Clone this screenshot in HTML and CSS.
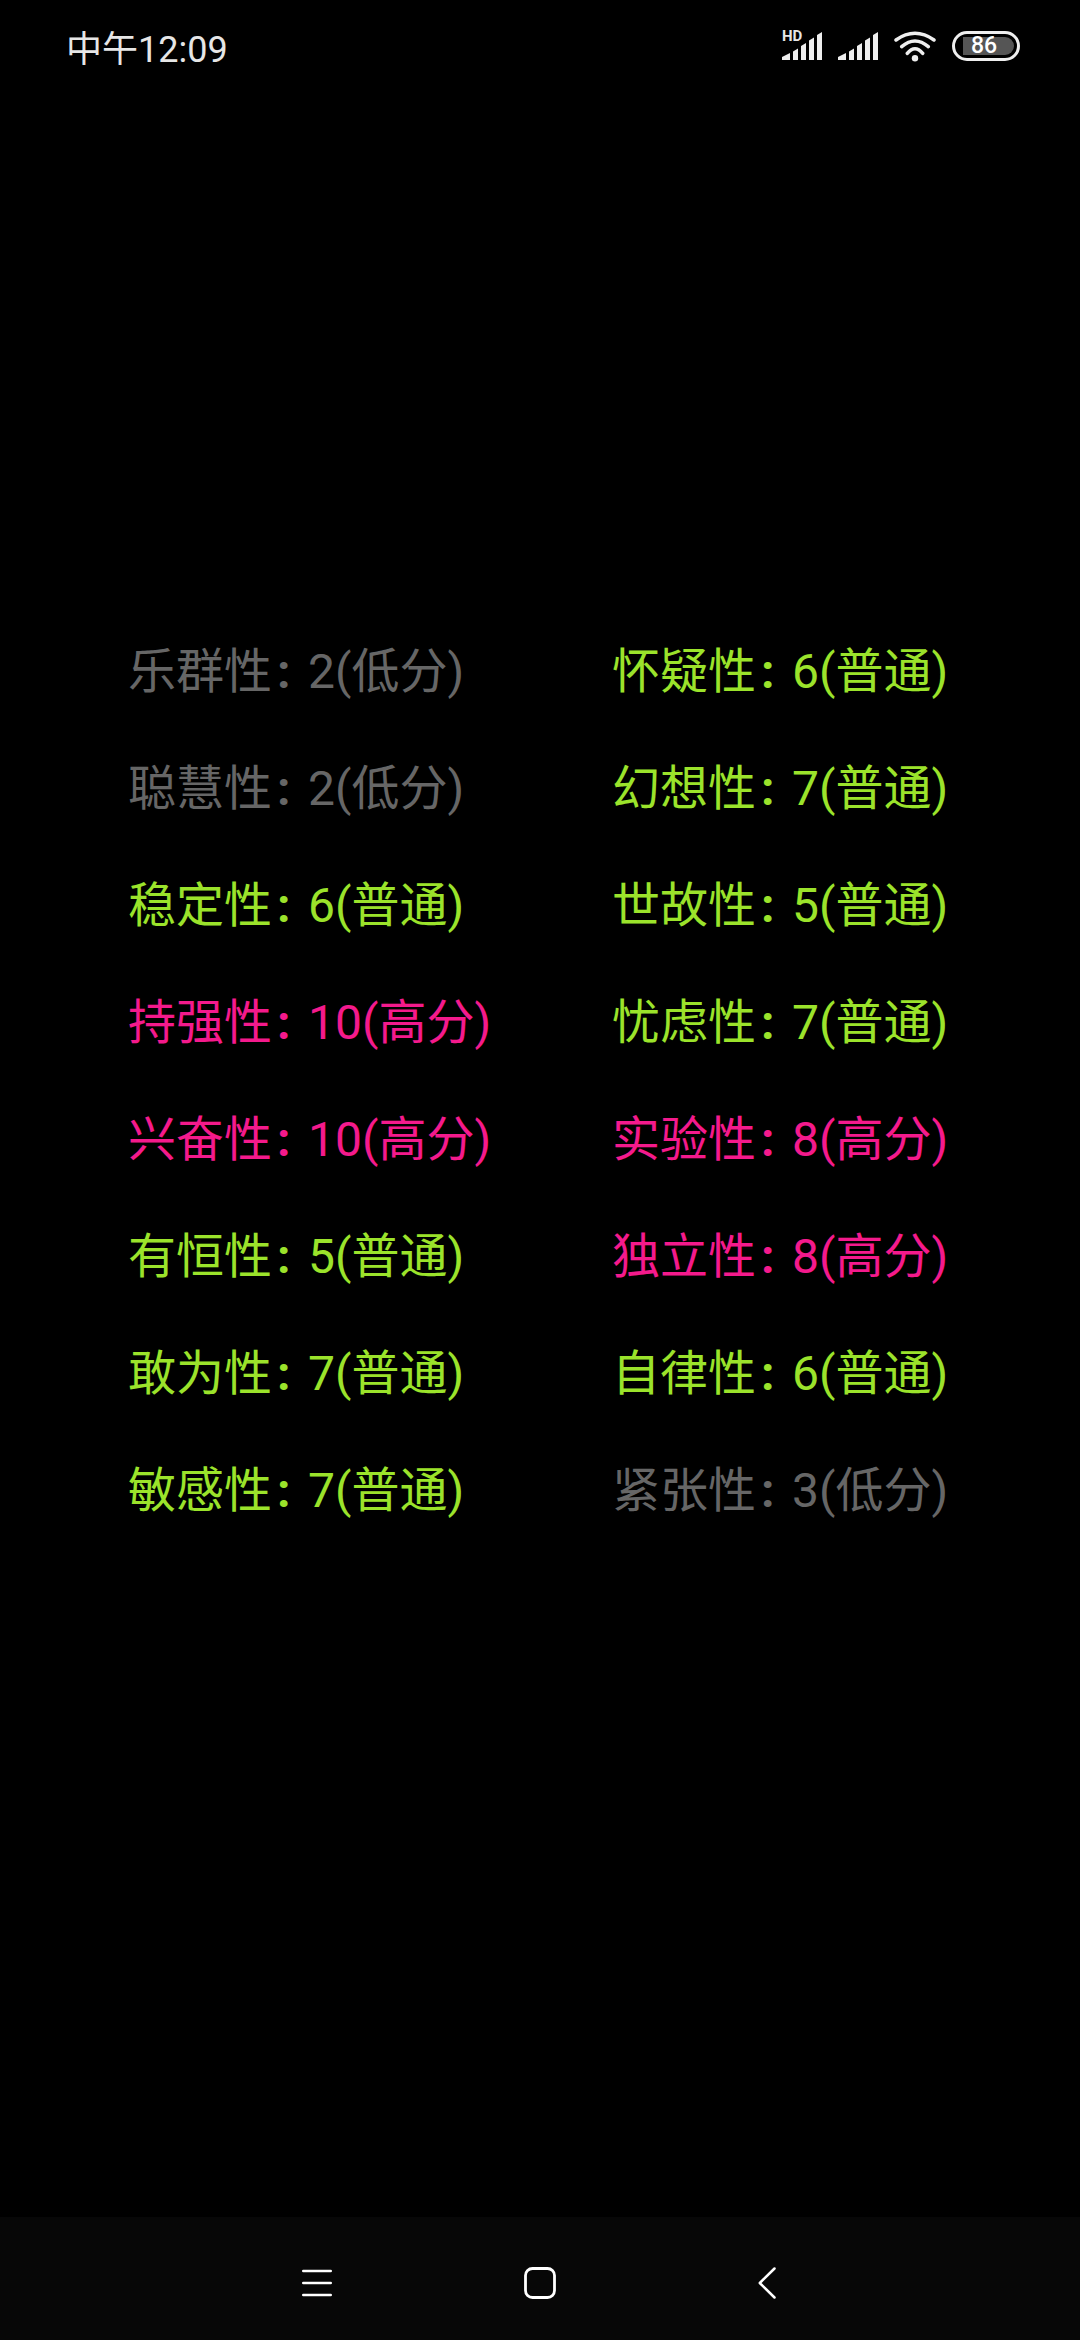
FILE: index.html
```html
<!DOCTYPE html>
<html lang="zh">
<head>
  <meta charset="UTF-8">
  <meta name="viewport" content="width=device-width, initial-scale=1.0">
  <title>性格因素</title>
  <link rel="stylesheet" href="styles.css">
</head>
<body>
  <div class="screen">
    <div class="status-bar">
      <span class="clock">中午12:09</span>
      <div class="status-icons">
        <div class="signal-hd">
          <span class="hd">HD</span>
          <svg class="signal" width="40" height="28" viewBox="0 0 40 28">
            <path d="M0 28V25L8 21V28Z M11 28V19.500L16 16.500V28Z M19 28V14L24 11V28Z M27 28V8.500L32 5.500V28Z M35 28V3L40 0V28Z" fill="#eee"/>
          </svg>
        </div>
        <svg class="signal" width="40" height="28" viewBox="0 0 40 28">
          <path d="M0 28V25L8 21V28Z M11 28V19.500L16 16.500V28Z M19 28V14L24 11V28Z M27 28V8.500L32 5.500V28Z M35 28V3L40 0V28Z" fill="#eee"/>
        </svg>
        <svg class="wifi" width="42" height="31" viewBox="0 0 42 31">
          <path d="M2 9Q21 -4.400 40 9 M7.700 15.700Q21 4.300 34.300 15.700 M13.300 22.300Q21 13 28.700 22.300" fill="none" stroke="#eee" stroke-width="3.500" stroke-linecap="round"/>
          <circle cx="21" cy="27.300" r="3.200" fill="#eee"/>
        </svg>
        <div class="battery">
          <span class="battery-level">86</span>
        </div>
      </div>
    </div>

    <div class="traits">
      <div class="trait low">乐群性<span class="sep">:</span>2(低分)</div>
      <div class="trait mid">怀疑性<span class="sep">:</span>6(普通)</div>
      <div class="trait low">聪慧性<span class="sep">:</span>2(低分)</div>
      <div class="trait mid">幻想性<span class="sep">:</span>7(普通)</div>
      <div class="trait mid">稳定性<span class="sep">:</span>6(普通)</div>
      <div class="trait mid">世故性<span class="sep">:</span>5(普通)</div>
      <div class="trait high">持强性<span class="sep">:</span>10(高分)</div>
      <div class="trait mid">忧虑性<span class="sep">:</span>7(普通)</div>
      <div class="trait high">兴奋性<span class="sep">:</span>10(高分)</div>
      <div class="trait high">实验性<span class="sep">:</span>8(高分)</div>
      <div class="trait mid">有恒性<span class="sep">:</span>5(普通)</div>
      <div class="trait high">独立性<span class="sep">:</span>8(高分)</div>
      <div class="trait mid">敢为性<span class="sep">:</span>7(普通)</div>
      <div class="trait mid">自律性<span class="sep">:</span>6(普通)</div>
      <div class="trait mid">敏感性<span class="sep">:</span>7(普通)</div>
      <div class="trait low">紧张性<span class="sep">:</span>3(低分)</div>
    </div>

    <div class="nav-bar">
      <svg class="nav-menu" width="30" height="28" viewBox="0 0 30 28">
        <path d="M1.250 2H28.750 M1.250 14H28.750 M1.250 26H28.750" stroke="#fff" stroke-width="2.500" stroke-linecap="round"/>
      </svg>
      <svg class="nav-home" width="32" height="32" viewBox="0 0 32 32">
        <rect x="1.500" y="1.500" width="29" height="29" rx="7" fill="none" stroke="#fff" stroke-width="2.800"/>
      </svg>
      <svg class="nav-back" width="18" height="32" viewBox="0 0 18 32">
        <path d="M16.500 1.500L1.800 16L16.500 30.500" fill="none" stroke="#fff" stroke-width="2.500" stroke-linecap="round" stroke-linejoin="round"/>
      </svg>
    </div>
  </div>
</body>
</html>
```

FILE: styles.css
```css
body {
  margin: 0;
  background-color: #000;
  font-family: Roboto, "Noto Sans CJK SC", sans-serif;
}
.screen {
  display: flex;
  flex-direction: column;
  width: 1080px;
  height: 2340px;
  overflow: hidden;
}
.status-bar {
  display: flex;
  align-items: center;
  justify-content: space-between;
  height: 92px;
  padding: 0 60px 0 66px;
  color: #e6e6e6;
}
.clock {
  font-size: 36px;
}
.status-icons {
  display: flex;
  align-items: center;
  gap: 16px;
}
.signal-hd {
  position: relative;
  display: flex;
}
.hd {
  position: absolute;
  left: 0;
  top: -2px;
  font-size: 15px;
  font-weight: 700;
  line-height: 13px;
}
.battery {
  display: flex;
  justify-content: flex-end;
  box-sizing: border-box;
  width: 68px;
  height: 30px;
  border: 3px solid #eee;
  border-radius: 15px;
  padding: 3px;
}
.battery-level {
  box-sizing: border-box;
  width: 51px;
  padding-left: 8px;
  background-color: #555;
  border-radius: 0 9px 9px 0;
  color: #fff;
  font-size: 23px;
  font-weight: 500;
  line-height: 18px;
}
.traits {
  flex-grow: 1;
  display: grid;
  grid-template-columns: 484px 1fr;
  grid-auto-rows: 117px;
  padding: 521px 0 0 128px;
  font-size: 48px;
}
.trait {
  line-height: 117px;
  white-space: nowrap;
}
.sep {
  display: inline-block;
  box-sizing: border-box;
  width: 36px;
  padding-left: 5px;
  font-weight: 700;
}
.low {
  color: #666;
}
.mid {
  color: #9be32b;
}
.high {
  color: #f41a8c;
}
.nav-bar {
  height: 123px;
  box-sizing: border-box;
  padding: 9px 0 0 302px;
  background-color: #070707;
  display: flex;
  align-items: center;
}
.nav-home {
  margin-left: 192px;
}
.nav-back {
  margin-left: 202px;
}
```
